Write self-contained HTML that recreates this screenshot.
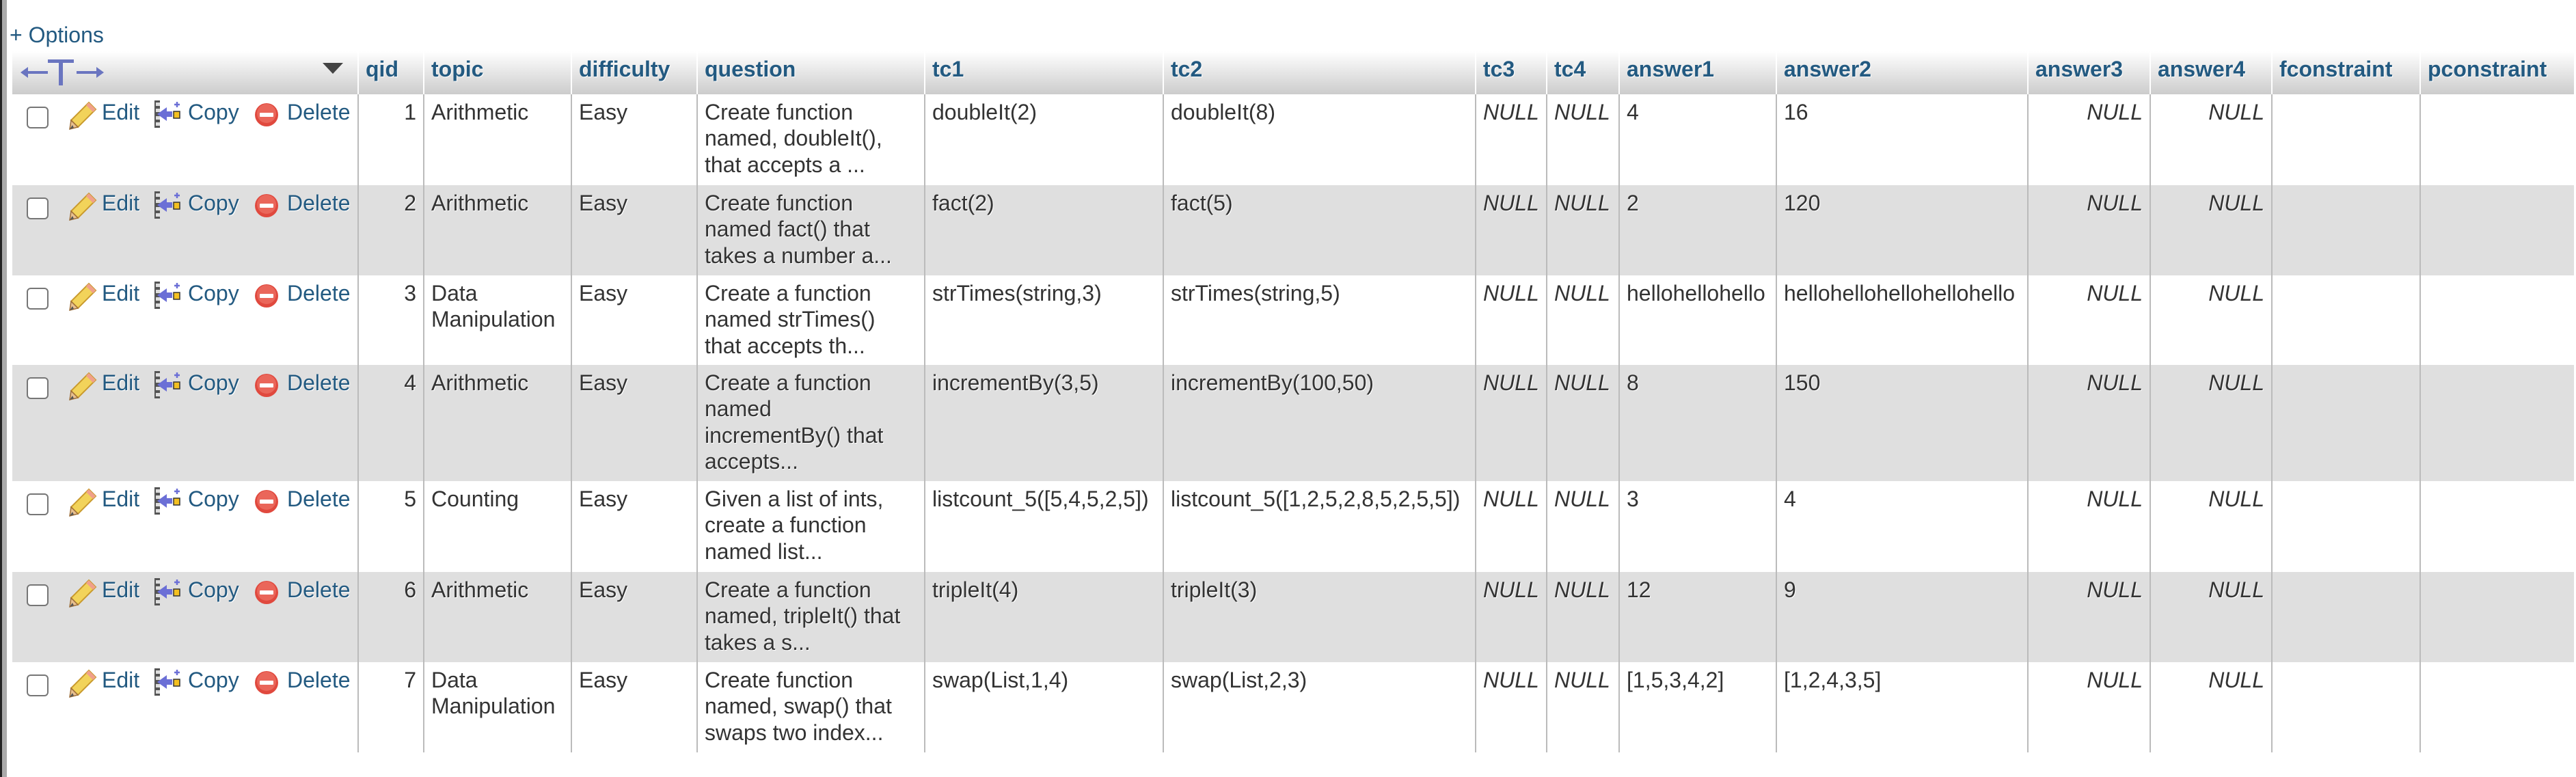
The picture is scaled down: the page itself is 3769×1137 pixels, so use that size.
<!DOCTYPE html>
<html><head><meta charset="utf-8">
<style>
html,body{margin:0;padding:0;background:#fff;}
body{width:3769px;height:1137px;position:relative;overflow:hidden;font-family:"Liberation Sans",Arial,sans-serif;}
.lbar{position:absolute;left:0;top:0;width:10px;height:1137px;background:#aaa;border-left:3px solid #222;box-sizing:border-box;}
.opt{position:absolute;left:14px;top:32px;font-size:32px;color:#235a81;line-height:38px;}
table{position:absolute;left:18px;top:75px;border-collapse:collapse;table-layout:fixed;width:3748px;font-size:32px;line-height:38.4px;color:#333;}
th{height:63px;padding:0 10px 10px 10px;text-align:left;font-weight:bold;color:#235a81;text-shadow:1px 1px 0 #fff;background:linear-gradient(#fff,#ccc);border-left:2px solid #fff;box-sizing:border-box;white-space:nowrap;overflow:hidden;}
th:first-child{border-left:none;position:relative;}
td{vertical-align:top;padding:7px 10px 0 10px;border-left:2px solid #bbb;box-sizing:border-box;overflow:hidden;}
td:first-child{border-left:none;position:relative;padding:0;}
tr.g td{background:#dfdfdf;text-shadow:1px 1px 0 #fff;}
.r{text-align:right;}
.n{font-style:italic;}
.nw{white-space:nowrap;}
.q{white-space:nowrap;}
.cb{position:absolute;left:21px;top:18px;width:32px;height:32px;border:2px solid #767676;border-radius:6px;background:#fff;box-sizing:border-box;}
.a{position:absolute;top:7px;color:#235a81;white-space:nowrap;}
.ic{position:absolute;top:15px;}
</style></head><body>
<div class="lbar"></div>
<div class="opt">+ Options</div>
<table>
<colgroup><col style="width:506px"><col style="width:96px"><col style="width:216px"><col style="width:184px"><col style="width:333px"><col style="width:349px"><col style="width:457px"><col style="width:104px"><col style="width:106px"><col style="width:230px"><col style="width:368px"><col style="width:179px"><col style="width:178px"><col style="width:217px"><col style="width:225px"></colgroup>
<tr>
<th><svg style="position:absolute;left:12px;top:10px" width="122" height="42" viewBox="0 0 122 42"><g fill="#6a75c0"><rect x="40" y="2" width="38" height="5"/><rect x="56" y="2" width="6" height="38"/><rect x="6" y="19" width="34" height="4"/><polygon points="0,21 11,13 11,29"/><rect x="82" y="19" width="34" height="4"/><polygon points="122,21 111,13 111,29"/></g></svg><svg style="position:absolute;left:454px;top:17px" width="30" height="16" viewBox="0 0 30 16"><polygon points="0,0 30,0 15,16" fill="#444"/></svg></th>
<th>qid</th><th>topic</th><th>difficulty</th><th>question</th><th>tc1</th><th>tc2</th><th>tc3</th><th>tc4</th><th>answer1</th><th>answer2</th><th>answer3</th><th>answer4</th><th>fconstraint</th><th>pconstraint</th>
</tr>
<tbody id="b">
<tr style="height:133px"><td>ACT</td><td class="r">1</td><td>Arithmetic</td><td>Easy</td><td class="q">Create function<br>named, doubleIt(),<br>that accepts a ...</td><td class="nw">doubleIt(2)</td><td class="nw">doubleIt(8)</td><td class="n">NULL</td><td class="n">NULL</td><td>4</td><td>16</td><td class="n r">NULL</td><td class="n r">NULL</td><td></td><td></td></tr>
<tr class="g" style="height:132px"><td>ACT</td><td class="r">2</td><td>Arithmetic</td><td>Easy</td><td class="q">Create function<br>named fact() that<br>takes a number a...</td><td class="nw">fact(2)</td><td class="nw">fact(5)</td><td class="n">NULL</td><td class="n">NULL</td><td>2</td><td>120</td><td class="n r">NULL</td><td class="n r">NULL</td><td></td><td></td></tr>
<tr style="height:131px"><td>ACT</td><td class="r">3</td><td>Data Manipulation</td><td>Easy</td><td class="q">Create a function<br>named strTimes()<br>that accepts th...</td><td class="nw">strTimes(string,3)</td><td class="nw">strTimes(string,5)</td><td class="n">NULL</td><td class="n">NULL</td><td class="nw">hellohellohello</td><td class="nw">hellohellohellohellohello</td><td class="n r">NULL</td><td class="n r">NULL</td><td></td><td></td></tr>
<tr class="g" style="height:170px"><td>ACT</td><td class="r">4</td><td>Arithmetic</td><td>Easy</td><td class="q">Create a function<br>named<br>incrementBy() that<br>accepts...</td><td class="nw">incrementBy(3,5)</td><td class="nw">incrementBy(100,50)</td><td class="n">NULL</td><td class="n">NULL</td><td>8</td><td>150</td><td class="n r">NULL</td><td class="n r">NULL</td><td></td><td></td></tr>
<tr style="height:133px"><td>ACT</td><td class="r">5</td><td>Counting</td><td>Easy</td><td class="q">Given a list of ints,<br>create a function<br>named list...</td><td class="nw">listcount_5([5,4,5,2,5])</td><td class="nw">listcount_5([1,2,5,2,8,5,2,5,5])</td><td class="n">NULL</td><td class="n">NULL</td><td>3</td><td>4</td><td class="n r">NULL</td><td class="n r">NULL</td><td></td><td></td></tr>
<tr class="g" style="height:132px"><td>ACT</td><td class="r">6</td><td>Arithmetic</td><td>Easy</td><td class="q">Create a function<br>named, tripleIt() that<br>takes a s...</td><td class="nw">tripleIt(4)</td><td class="nw">tripleIt(3)</td><td class="n">NULL</td><td class="n">NULL</td><td>12</td><td>9</td><td class="n r">NULL</td><td class="n r">NULL</td><td></td><td></td></tr>
<tr style="height:132px"><td>ACT</td><td class="r">7</td><td>Data Manipulation</td><td>Easy</td><td class="q">Create function<br>named, swap() that<br>swaps two index...</td><td class="nw">swap(List,1,4)</td><td class="nw">swap(List,2,3)</td><td class="n">NULL</td><td class="n">NULL</td><td class="nw">[1,5,3,4,2]</td><td class="nw">[1,2,4,3,5]</td><td class="n r">NULL</td><td class="n r">NULL</td><td></td><td></td></tr>
</tbody>
</table>
<script>
var act='<span class="cb"></span>'+
'<svg class="ic" style="left:82px;top:10px" width="42" height="42" viewBox="0 0 42 42"><polygon points="30,2 40,12 14,38 4,28" fill="#f2d35a" stroke="#c99a2e" stroke-width="2"/><polygon points="30,2 40,12 36,16 26,6" fill="#f0a08a"/><polygon points="4,28 14,38 2,41" fill="#e8c090" stroke="#a0703a" stroke-width="1.5"/><polygon points="2,41 6,35 8,39" fill="#555"/></svg>'+
'<span class="a" style="left:131px">Edit</span>'+
'<svg class="ic" style="left:208px;top:9px" width="38" height="40" viewBox="0 0 38 40"><rect x="0" y="0" width="8" height="40" fill="#555"/><rect x="2" y="3" width="6" height="5" fill="#ddd"/><rect x="2" y="12" width="6" height="5" fill="#ddd"/><rect x="2" y="23" width="6" height="5" fill="#ddd"/><rect x="2" y="32" width="6" height="5" fill="#ddd"/><polygon points="4,20 18,10 18,16 26,16 26,24 18,24 18,30" fill="#6b6fd6"/><rect x="28" y="16" width="9" height="10" fill="#f4c020" stroke="#333" stroke-width="1.5"/><path d="M33 2v8M29 6h8" stroke="#6b6fd6" stroke-width="2.5"/></svg>'+
'<span class="a" style="left:257px">Copy</span>'+
'<svg class="ic" style="left:354px;top:12px" width="36" height="36" viewBox="0 0 36 36"><circle cx="18" cy="18" r="17" fill="#e0493e"/><circle cx="18" cy="16" r="14" fill="#f07a6e" opacity=".6"/><rect x="8" y="15" width="20" height="6" rx="1" fill="#fff"/></svg>'+
'<span class="a" style="left:402px">Delete</span>';
document.querySelectorAll('#b tr').forEach(function(r){r.cells[0].innerHTML=act;});
</script>
</body></html>
